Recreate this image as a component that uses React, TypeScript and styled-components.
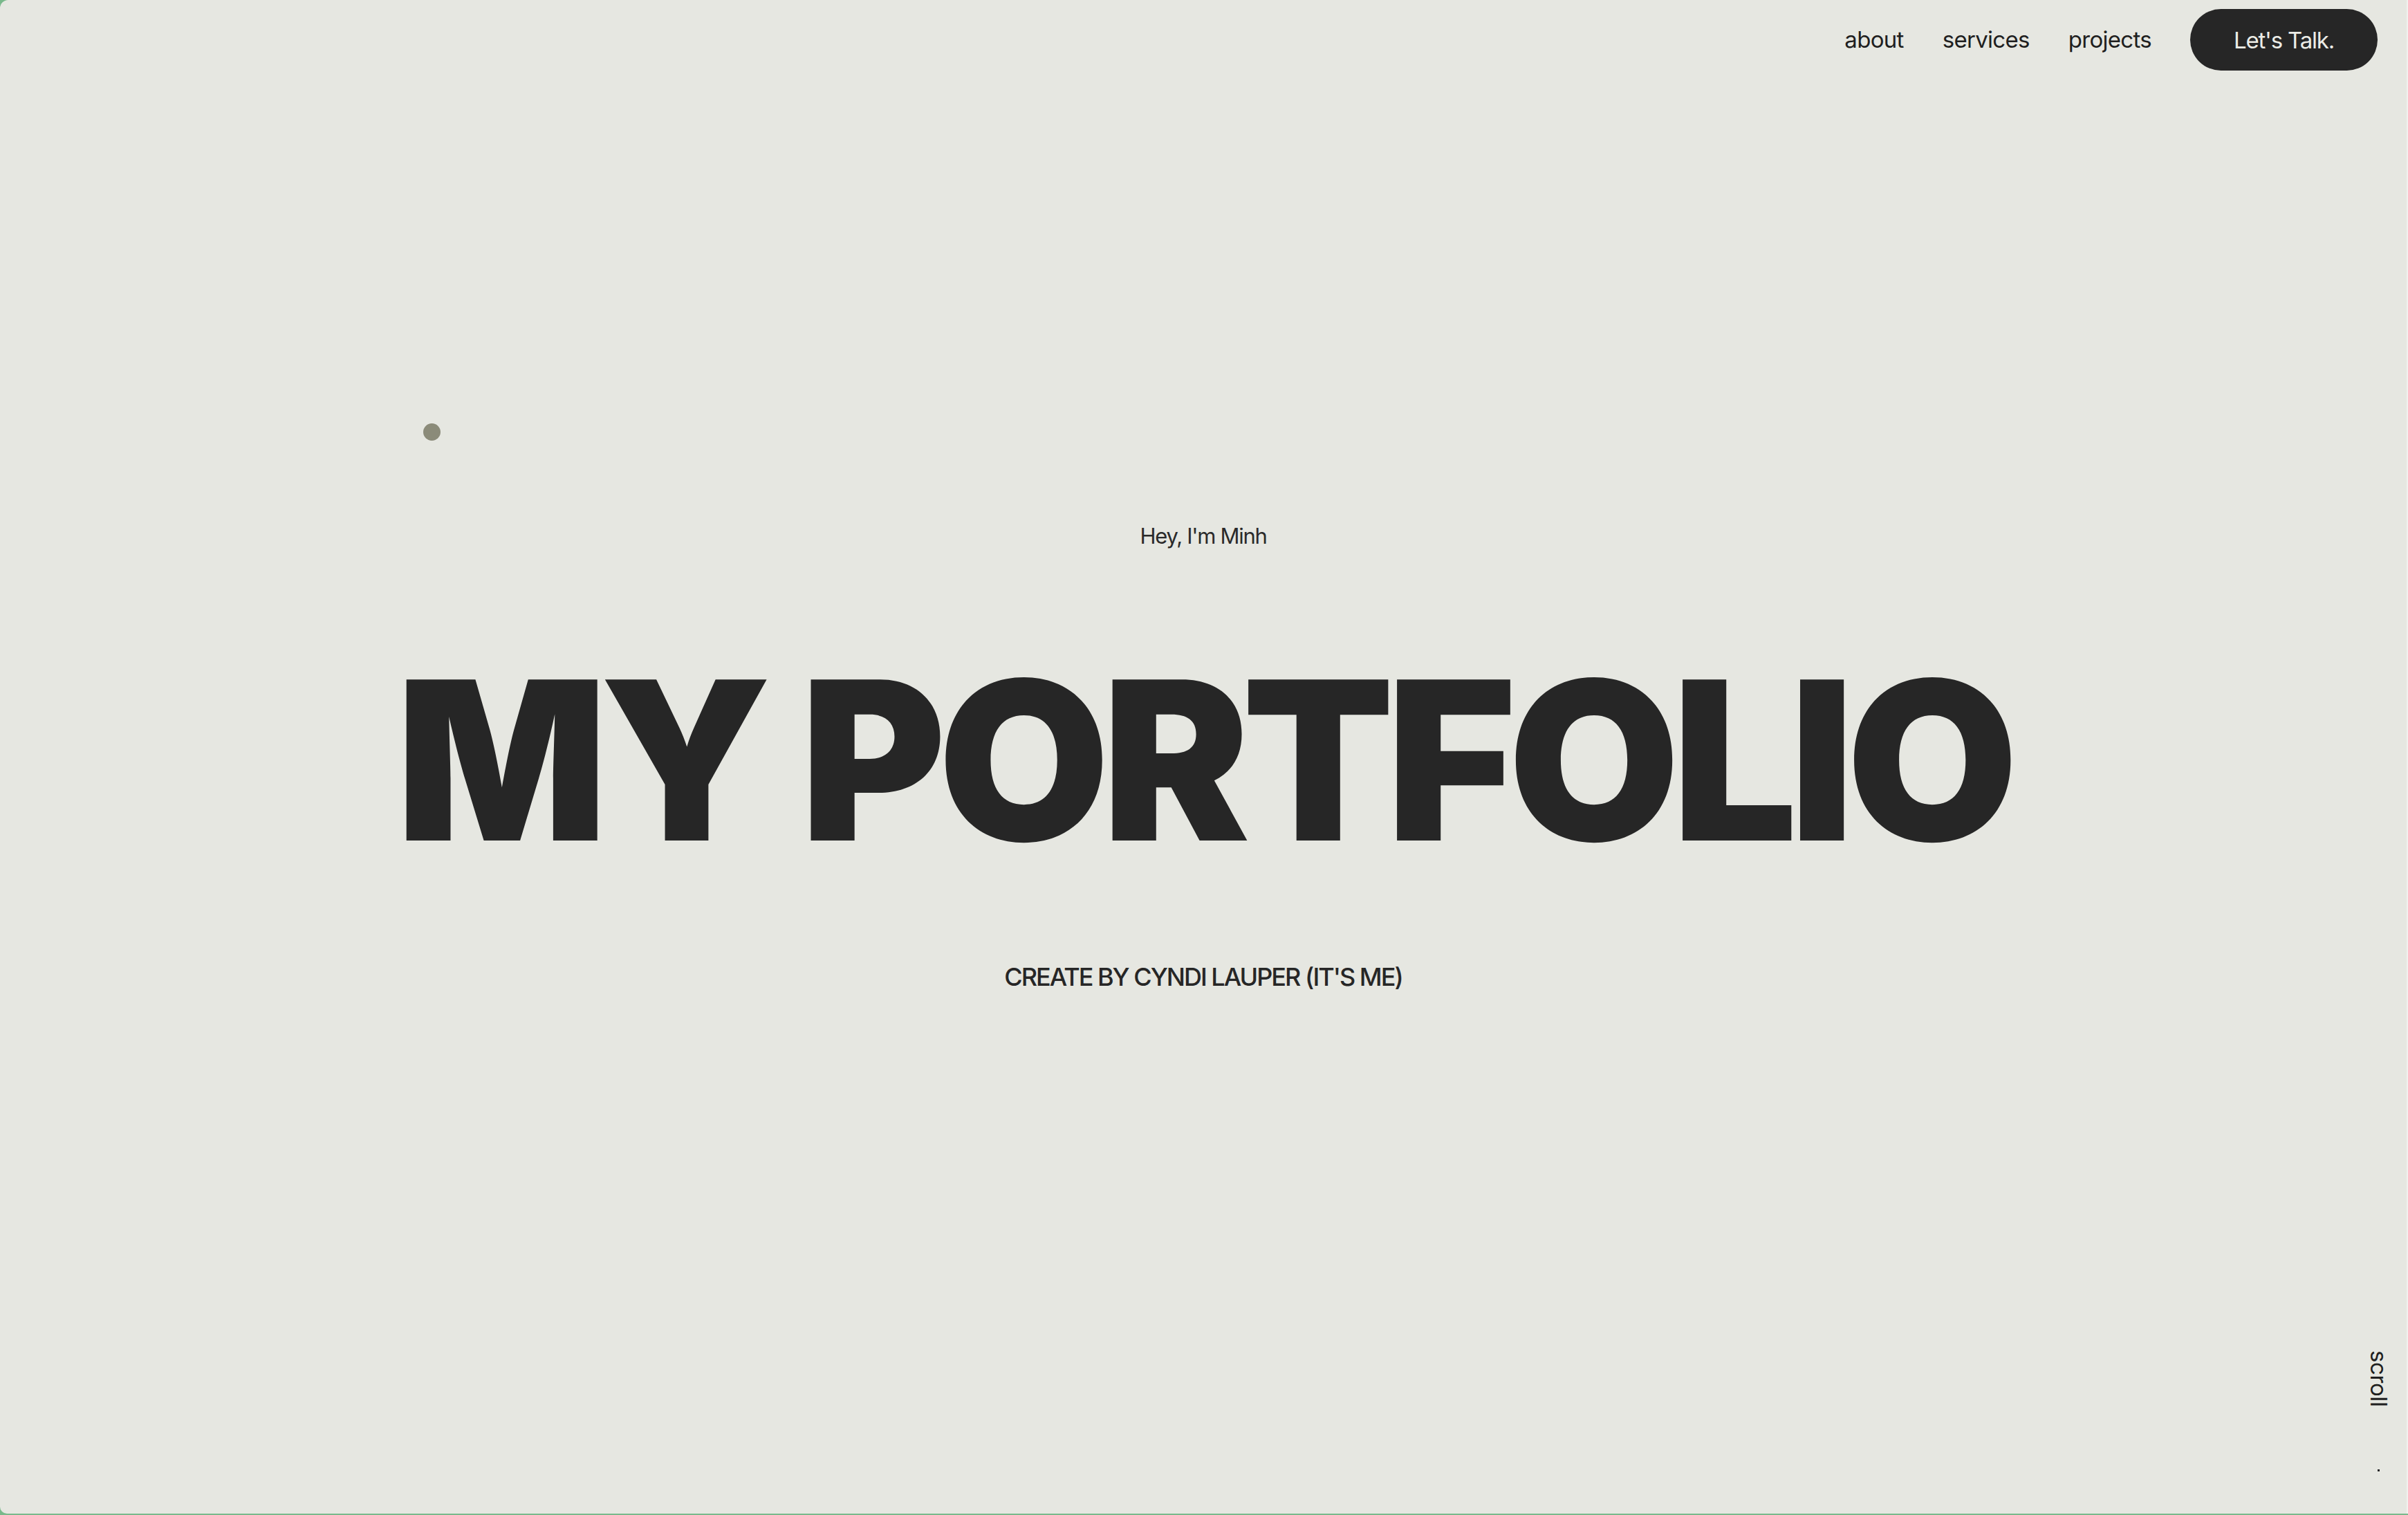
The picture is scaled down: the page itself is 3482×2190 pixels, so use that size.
import React from "react";
import styled, { createGlobalStyle } from "styled-components";

const GlobalStyle = createGlobalStyle`
  html, body {
    margin: 0;
    padding: 0;
    background: #79b98b;
  }
  * { box-sizing: border-box; }
  body {
    font-family: Inter, "Liberation Sans", sans-serif;
    color: #262626;
  }
`;

const Frame = styled.div`
  position: relative;
  width: 3482px;
  height: 2188px;
  background: #e6e7e1;
  border-radius: 12px 0 0 10px;
  border-right: 2px solid #f1f1ee;
  overflow: hidden;
  display: flex;
  flex-direction: column;
`;

const Header = styled.header`
  display: flex;
  justify-content: flex-end;
  align-items: center;
  padding: 13px 42px 0 0;
`;

const Nav = styled.nav`
  display: flex;
  align-items: center;
  gap: 56px;
`;

const NavLink = styled.a`
  font-family: Inter, "Liberation Sans", sans-serif;
  font-size: 33px;
  font-weight: 400;
  letter-spacing: -0.7px;
  color: #1f1f1f;
  text-decoration: none;
  line-height: 1;
`;

const TalkButton = styled.button`
  height: 89px;
  width: 271px;
  border: none;
  border-radius: 45px;
  background: #262626;
  color: #ecece6;
  font-family: Inter, "Liberation Sans", sans-serif;
  font-size: 33px;
  letter-spacing: -1.2px;
  font-weight: 400;
  cursor: pointer;
`;

const Hero = styled.main`
  display: flex;
  flex-direction: column;
  align-items: center;
  padding-top: 657px;
`;

const Greeting = styled.p`
  margin: 0;
  font-size: 31px;
  line-height: 1;
  letter-spacing: -1.3px;
  color: #2a2a2a;
`;

const Title = styled.h1`
  margin: 149px 0 0;
  font-family: Inter, "Liberation Sans", sans-serif;
  font-weight: 900;
  font-size: 320px;
  line-height: 1;
  letter-spacing: -11px;
  color: #262626;
  white-space: nowrap;
`;

const Credit = styled.p`
  margin: 135px 0 0;
  font-size: 36px;
  line-height: 1;
  font-weight: 500;
  letter-spacing: -2px;
  text-transform: uppercase;
  color: #262626;
`;

const CursorDot = styled.span`
  position: absolute;
  left: 612px;
  top: 612px;
  width: 25px;
  height: 25px;
  border-radius: 50%;
  background: #8b8b79;
`;

const ScrollHint = styled.div`
  position: absolute;
  right: 24px;
  top: 1952px;
  display: flex;
  flex-direction: column;
  align-items: center;
  gap: 90px;
`;

const ScrollLabel = styled.span`
  writing-mode: vertical-rl;
  font-size: 33px;
  line-height: 1;
  letter-spacing: -0.4px;
  color: #1f1f1f;
`;

const ScrollTick = styled.span`
  width: 3px;
  height: 3px;
  background: #262626;
`;

export default function App() {
  return (
    <>
      <GlobalStyle />
      <Frame>
        <Header>
          <Nav>
            <NavLink href="#about">about</NavLink>
            <NavLink href="#services">services</NavLink>
            <NavLink href="#projects">projects</NavLink>
            <TalkButton>Let's Talk.</TalkButton>
          </Nav>
        </Header>
        <Hero>
          <Greeting>Hey, I'm Minh</Greeting>
          <Title>MY PORTFOLIO</Title>
          <Credit>Create by Cyndi Lauper (It's me)</Credit>
        </Hero>
        <CursorDot />
        <ScrollHint>
          <ScrollLabel>scroll</ScrollLabel>
          <ScrollTick />
        </ScrollHint>
      </Frame>
    </>
  );
}
